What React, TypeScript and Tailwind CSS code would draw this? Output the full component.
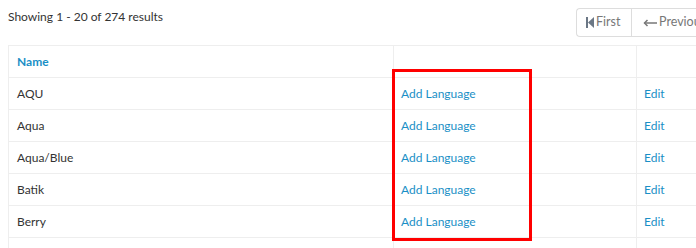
const rows = ["AQU", "Aqua", "Aqua/Blue", "Batik", "Berry", ""];

export default function App() {
  return (
    <div
      className="relative h-[248px] w-[696px] overflow-hidden bg-white text-[12px] text-[#333]"
      style={{ fontFamily: "Lato, 'Open Sans', sans-serif" }}
    >
      <div className="flex h-[45px] items-start justify-between pl-2">
        <div className="pt-[8px] leading-[18px]">Showing 1 - 20 of 274 results</div>
        <div className="mt-2 flex h-[29px] w-[120px] shrink-0 rounded-l-[4px] border border-r-0 border-[#ddd] text-[12.5px] text-[#777]">
          <div className="flex w-[55px] shrink-0 items-center gap-[2px] border-r border-[#ddd] pl-[9px]">
            <svg width="8" height="11" viewBox="0 0 8 11" fill="#6b7785">
              <rect x="0" y="0" width="2" height="11" />
              <polygon points="8,0 2,5.5 8,11" />
            </svg>
            <span>First</span>
          </div>
          <div className="flex shrink-0 items-center gap-[2px] whitespace-nowrap pl-[11px]">
            <svg width="14" height="8" viewBox="0 0 14 8" fill="none" stroke="#777" strokeWidth="1.5">
              <path d="M14 4H1.5" />
              <path d="M4.5 1L1.5 4l3 3" />
            </svg>
            <span>Previous</span>
          </div>
        </div>
      </div>
      <div className="ml-2 w-[720px] border-l border-t border-[#eee]">
        <div className="flex h-[32px] border-b border-[#eee]">
          <div className="flex w-[384px] items-center pl-[8px] font-bold text-[#1a8fc6]">Name</div>
          <div className="w-[243px] border-l border-[#eee]" />
          <div className="flex-1 border-l border-[#eee]" />
        </div>
        {rows.map((name, i) => (
          <div key={i} className="flex h-[32px] border-b border-[#eee]">
            <div className="flex w-[384px] items-center pl-[8px]">{name}</div>
            <div className="flex w-[243px] items-center border-l border-[#eee] pl-[7px] text-[#1a8fc6]">
              {name && "Add Language"}
            </div>
            <div className="flex flex-1 items-center border-l border-[#eee] pl-[7px] text-[#1a8fc6]">
              {name && "Edit"}
            </div>
          </div>
        ))}
      </div>
      <div className="pointer-events-none absolute left-[392px] top-[69px] h-[172px] w-[140px] border-[3px] border-[#ff0000]" />
    </div>
  );
}
